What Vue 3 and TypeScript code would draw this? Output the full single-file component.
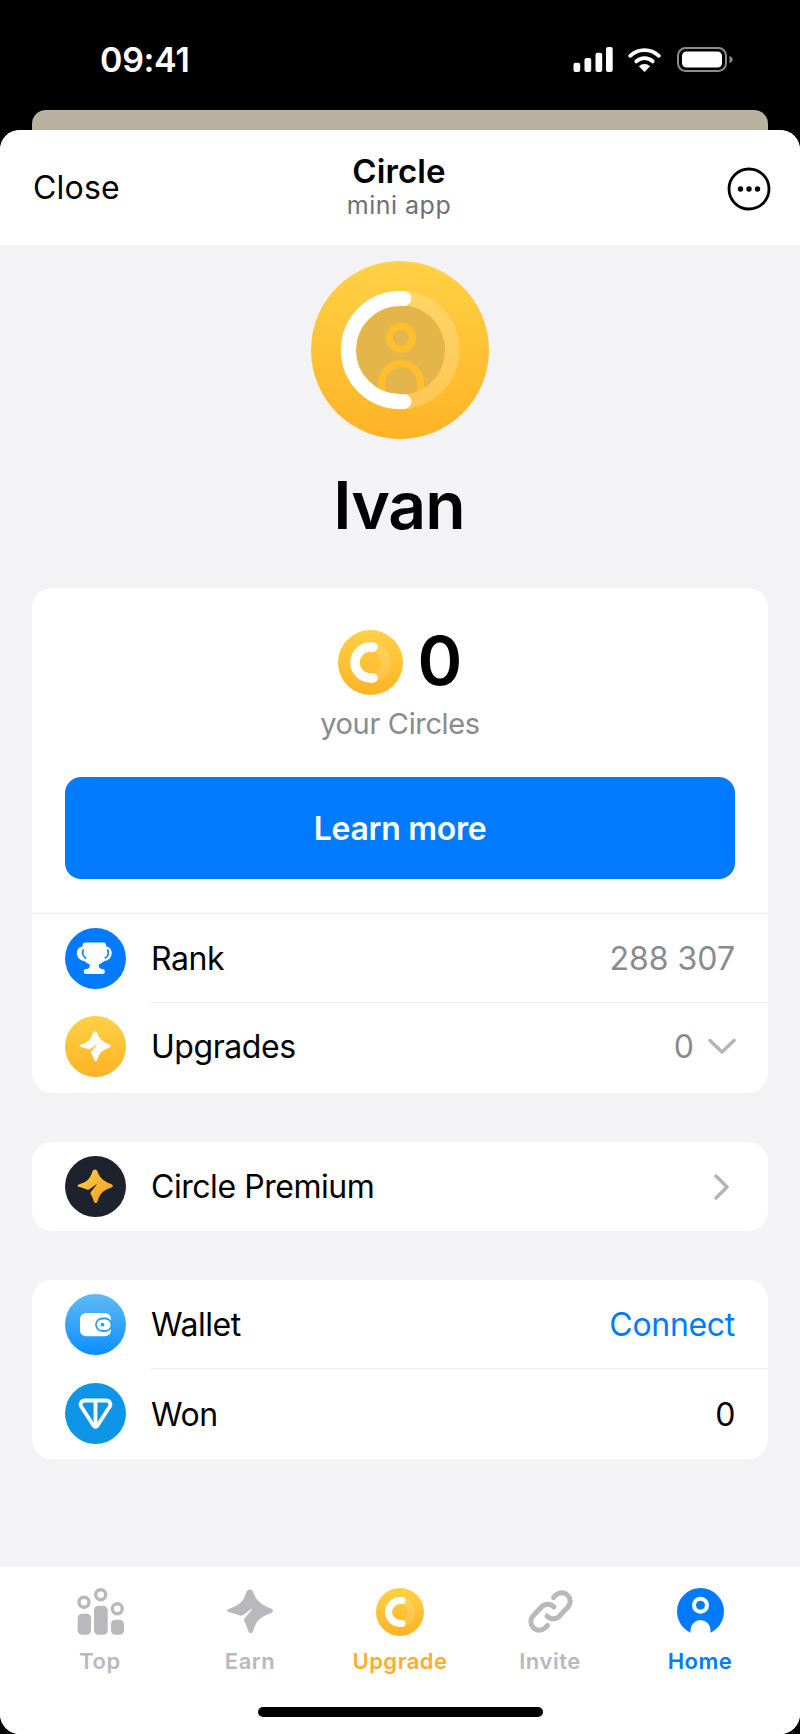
<script setup lang="ts">
interface Tab { label: string; kind: string }
const tabs: Tab[] = [
  { label: 'Top', kind: 'top' },
  { label: 'Earn', kind: 'earn' },
  { label: 'Upgrade', kind: 'upgrade' },
  { label: 'Invite', kind: 'invite' },
  { label: 'Home', kind: 'home' },
]
const star = 'M23.5 1.500c1.200 0 2 .8 2.500 2.200 1.500 4.500 3.500 7.500 5.500 9.500 2.500 2.500 6.500 5 12 7 1.500.6 2.500 1.300 2.500 2.500s-1 2-2.500 2.500c-5 1.800-9 4-11.500 6.500-2 2-4.200 5.500-5.800 11-.5 1.500-1.200 2.300-2.500 2.300s-2-.9-2.500-2.300c-1-3.500-2.500-7-4-9.500-.5-1-.3-1.800.5-3l7-8.500c.5-.7.2-1.200-.5-.8l-8 6c-1.500 1-2.500 1-4 .4-3-1.200-6-1.800-10-3-1.300-.4-2-.9-2-1.700s.8-1.400 2.200-1.900c5-1.800 9-3.900 11.500-6.400 2.300-2.300 4-5.500 5.300-9.800.6-2 2.500-3.100 4-3.100Z'
</script>

<template>
  <div class="screen">
    <div class="status">
      <span class="time">09:41</span>
      <div class="status-icons">
        <svg class="signal" width="40" height="25" viewBox="0 0 40 25" fill="#fff"><rect x=".5" y="15.700" width="6.700" height="9.300" rx="2"/><rect x="11.500" y="11" width="6.700" height="14" rx="2"/><rect x="22.500" y="5.700" width="6.700" height="19.300" rx="2"/><rect x="33" y="0" width="6.700" height="25" rx="2"/></svg>
        <svg width="33" height="25" viewBox="0 0 33 25"><path d="M2.200 8.800a21 21 0 0 1 28.600 0" fill="none" stroke="#fff" stroke-width="3.800" stroke-linecap="round"/><path d="M8.300 14.400a12 12 0 0 1 16.400 0" fill="none" stroke="#fff" stroke-width="3.800" stroke-linecap="round"/><path d="M16.500 25l-5.600-5.700a8 8 0 0 1 11.200 0Z" fill="#fff"/></svg>
        <svg width="57" height="25" viewBox="0 0 57 25"><rect x="1" y="1" width="48" height="23" rx="7.500" fill="none" stroke="#8c8c8c" stroke-width="2"/><rect x="5" y="4.500" width="40" height="16" rx="4.500" fill="#fff"/><path d="M52.500 9c2 .6 3.200 2 3.200 3.500s-1.200 2.900-3.200 3.500Z" fill="#8c8c8c"/></svg>
      </div>
    </div>
    <div class="peek-wrap"><div class="peek"></div></div>

    <div class="sheet">
      <header class="head">
        <span class="close">Close</span>
        <div class="title">
          <strong>Circle</strong>
          <span>mini app</span>
        </div>
        <svg class="more" width="44" height="44" viewBox="0 0 44 44"><circle cx="22" cy="22" r="20" fill="none" stroke="#000" stroke-width="2.800"/><circle cx="13.500" cy="22" r="2.700"/><circle cx="22" cy="22" r="2.700"/><circle cx="30.500" cy="22" r="2.700"/></svg>
      </header>

      <main class="content">
        <svg class="avatar" width="178" height="178" viewBox="0 0 178 178">
          <defs>
            <linearGradient id="gold" x1="0" y1="0" x2="0" y2="1"><stop offset="0" stop-color="#ffd146"/><stop offset="1" stop-color="#ffb325"/></linearGradient>
            <clipPath id="inner"><circle cx="89" cy="89" r="45"/></clipPath>
          </defs>
          <circle cx="89" cy="89" r="89" fill="url(#gold)"/>
          <circle cx="89" cy="89" r="52" fill="none" stroke="#fff" stroke-opacity=".2" stroke-width="15"/>
          <circle cx="89" cy="89" r="45" fill="#e3b54a"/>
          <g clip-path="url(#inner)" fill="none" stroke="#ffbe2b" stroke-width="7">
            <circle cx="90" cy="77" r="11.500"/>
            <path d="M70.500 140v-18a19.500 19.500 0 0 1 39 0v18"/>
          </g>
          <path d="M93 37.500h-4a51.500 51.500 0 0 0 0 103h4" fill="none" stroke="#fff" stroke-width="15" stroke-linecap="round"/>
        </svg>
        <h1 class="name">Ivan</h1>

        <section class="card">
          <div class="balance">
            <div class="amount">
              <svg width="65" height="65" viewBox="0 0 65 65">
                <defs><linearGradient id="gold2" x1="0" y1="0" x2="0" y2="1"><stop offset="0" stop-color="#ffd146"/><stop offset="1" stop-color="#ffb325"/></linearGradient></defs>
                <circle cx="32.500" cy="32.500" r="32.500" fill="url(#gold2)"/>
                <circle cx="32.500" cy="32.500" r="15.500" fill="none" stroke="#fff" stroke-opacity=".14" stroke-width="9.500"/>
                <path d="M35 17h-2.500a15.500 15.500 0 0 0 0 31h2.500" fill="none" stroke="#fff" stroke-width="9.500" stroke-linecap="round"/>
              </svg>
              <span class="zero">0</span>
            </div>
            <div class="your">your Circles</div>
            <button class="learn">Learn more</button>
          </div>
          <div class="row r89">
            <span class="ic blue">
              <svg width="61" height="61" viewBox="0 0 61 61"><path d="M22.500 14.500h16c1.500 0 2.500 1 2.500 2.500v1.500c3.500.3 5.700 3 5.700 6.500 0 4.500-3 7.500-7.500 8-1.500 1.500-3.500 2.800-5.200 3.200v2.300c0 1 .8 2 2.500 2.500h1c1.400 0 2.300 1 2.300 2.200v.8c0 1.200-.8 2-2 2h-17c-1.200 0-2-.8-2-2v-.8c0-1.200.9-2.200 2.300-2.200h1c1.700-.5 2.500-1.500 2.500-2.500v-2.300c-1.700-.4-3.700-1.700-5.200-3.200-4.500-.5-7.500-3.500-7.500-8 0-3.500 2.200-6.200 5.700-6.500V17c0-1.500 1-2.500 2.500-2.500Z" fill="#fff"/><path d="M18.300 22c-1.500 2.500-.5 6.500 2.500 8M42.700 22c1.500 2.500.5 6.500-2.500 8" fill="none" stroke="#007aff" stroke-width="1.600" stroke-linecap="round"/></svg>
            </span>
            <div class="row-body"><span>Rank</span><span class="gray">288 307</span></div>
          </div>
          <div class="row r91">
            <span class="ic gold">
              <svg width="61" height="61" viewBox="-21.300 -21.300 89.600 89.600"><path :d="star" fill="#fff"/></svg>
            </span>
            <div class="row-body"><span>Upgrades</span><span class="right-group"><span class="gray">0</span><svg width="28" height="17" viewBox="0 0 28 17"><path d="M2 2.500l12 11.500 12-11.500" fill="none" stroke="#b5b5b9" stroke-width="3.500" stroke-linecap="round" stroke-linejoin="round"/></svg></span></div>
          </div>
        </section>

        <section class="card">
          <div class="row">
            <span class="ic dark">
              <svg width="61" height="61" viewBox="-16.300 -16.300 79.600 79.600"><defs><linearGradient id="gold3" x1="0" y1="0" x2="1" y2="1"><stop offset="0" stop-color="#ffcf4a"/><stop offset="1" stop-color="#f49a1c"/></linearGradient></defs><path :d="star" fill="url(#gold3)"/></svg>
            </span>
            <div class="row-body"><span>Circle Premium</span><svg class="chev" width="17" height="28" viewBox="0 0 17 28"><path d="M3 3l11 11L3 25" fill="none" stroke="#b5b5b9" stroke-width="3.500" stroke-linecap="round" stroke-linejoin="round"/></svg></div>
          </div>
        </section>

        <section class="card">
          <div class="row r88">
            <span class="ic sky">
              <svg width="61" height="61" viewBox="0 0 61 61"><rect x="15" y="19" width="31" height="23.300" rx="6" fill="#fff"/><rect x="31" y="24.500" width="15.500" height="12.500" rx="6.200" fill="#fff" stroke="#2f9ffb" stroke-width="1.800"/><circle cx="37.500" cy="30.700" r="1.900" fill="#2f9ffb"/></svg>
            </span>
            <div class="row-body"><span>Wallet</span><span class="link">Connect</span></div>
          </div>
          <div class="row last">
            <span class="ic ton">
              <svg width="61" height="61" viewBox="0 0 61 61"><path d="M20 17.500h21c3.500 0 5.500 3.200 3.800 6L32.200 43c-.8 1.200-2.600 1.200-3.400 0L16.200 23.500c-1.700-2.800.3-6 3.800-6Z" fill="none" stroke="#fff" stroke-width="3.800" stroke-linejoin="round"/><path d="M30.500 18v25" stroke="#fff" stroke-width="3.800"/></svg>
            </span>
            <div class="row-body"><span>Won</span><span>0</span></div>
          </div>
        </section>
      </main>

      <nav class="tabs">
        <div v-for="t in tabs" :key="t.kind" class="tab" :class="t.kind">
          <svg v-if="t.kind === 'top'" width="47" height="47" viewBox="0 0 47 47" fill="#b9b9bd"><rect x=".7" y="25.700" width="13.300" height="21" rx="4.500"/><rect x="17" y="17.700" width="13.700" height="29" rx="4.500"/><rect x="34" y="31.700" width="13" height="15" rx="4.500"/><g fill="none" stroke="#b9b9bd" stroke-width="3.400"><circle cx="7" cy="14.300" r="5"/><circle cx="23.700" cy="6.700" r="5"/><circle cx="40.300" cy="20.700" r="5"/></g></svg>
          <svg v-else-if="t.kind === 'earn'" width="47" height="47" viewBox="0 0 47 47"><path :d="star" fill="#b9b9bd"/></svg>
          <svg v-else-if="t.kind === 'upgrade'" width="48" height="48" viewBox="0 0 65 65"><defs><linearGradient id="gold4" x1="0" y1="0" x2="0" y2="1"><stop offset="0" stop-color="#ffd146"/><stop offset="1" stop-color="#ffb325"/></linearGradient></defs><circle cx="32.500" cy="32.500" r="32.500" fill="url(#gold4)"/><circle cx="32.500" cy="32.500" r="15.500" fill="none" stroke="#fff" stroke-opacity=".14" stroke-width="9.500"/><path d="M35 17h-2.500a15.500 15.500 0 0 0 0 31h2.500" fill="none" stroke="#fff" stroke-width="9.500" stroke-linecap="round"/></svg>
          <svg v-else-if="t.kind === 'invite'" width="47" height="47" viewBox="0 0 47 47" fill="none" stroke="#b9b9bd" stroke-width="5" stroke-linecap="round"><path d="M26.500 9.500L29 7a8.500 8.500 0 0 1 12 12l-8 8.500a8.500 8.500 0 0 1-13 .5"/><path d="M20.500 37.500L18 40a8.500 8.500 0 0 1-12-12l8-8.500a8.500 8.500 0 0 1 13-.5"/></svg>
          <svg v-else width="47" height="47" viewBox="0 0 47 47"><circle cx="23.500" cy="23.500" r="23.500" fill="#007aff"/><circle cx="23.500" cy="17.300" r="6.500" fill="none" stroke="#fff" stroke-width="4"/><path d="M13.500 46v-4a10 10 0 0 1 20 0v4a23.500 23.500 0 0 1-20 0Z" fill="#fff"/></svg>
          <span class="label">{{ t.label }}</span>
        </div>
        <div class="indicator"></div>
      </nav>
    </div>
  </div>
</template>

<style>
html, body { margin: 0; background: #000; }
</style>

<style scoped>
* { box-sizing: border-box; }
.screen { width: 800px; height: 1734px; background: #000; display: flex; flex-direction: column; font-family: Inter, "Liberation Sans", sans-serif; color: #000; overflow: hidden; }
.status { height: 110px; display: flex; justify-content: space-between; align-items: flex-start; padding: 40px 66px 0 100px; color: #fff; }
.time { font-size: 34px; font-weight: 600; line-height: 40px; letter-spacing: -.3px; }
.status-icons { display: flex; gap: 16px; align-items: center; padding-top: 7px; }
.status-icons svg { display: block; }
.signal { margin-right: -1px; }
.peek-wrap { padding: 0 32px; height: 20px; flex: none; }
.peek { height: 40px; border-radius: 14px; background: #b9b19f; }
.sheet { flex: 1; position: relative; display: flex; flex-direction: column; border-radius: 20px; background: #f3f3f6; overflow: hidden; min-height: 0; }
.head { height: 115px; flex: none; background: #fff; display: flex; align-items: center; justify-content: space-between; padding: 0 29px 0 33px; position: relative; }
.close { font-size: 32px; letter-spacing: .2px; }
.title { position: absolute; left: 0; right: 2px; top: 21px; display: flex; flex-direction: column; align-items: center; pointer-events: none; }
.title strong { font-size: 33px; line-height: 40px; font-weight: 600; letter-spacing: .1px; }
.title span { font-size: 25px; line-height: 28px; color: #707074; letter-spacing: .5px; }
.more { margin-top: 3px; }
.content { flex: 1; min-height: 0; display: flex; flex-direction: column; align-items: center; padding: 16px 32px 0; }
.avatar { flex: none; }
.name { margin: 27px 0 44px; padding-right: 2px; font-size: 66px; line-height: 78px; font-weight: 600; letter-spacing: -1px; }
.card { width: 100%; background: #fff; border-radius: 20px; margin-bottom: 49px; flex: none; }
.balance { height: 326px; padding: 40px 33px 0; border-bottom: 1px solid #ececee; display: flex; flex-direction: column; align-items: center; }
.amount { display: flex; align-items: center; gap: 15px; height: 68px; }
.zero { font-size: 68px; font-weight: 600; line-height: 68px; margin-bottom: 5px; }
.your { font-size: 29px; line-height: 40px; margin-top: 8px; color: #8a8a8e; letter-spacing: -.35px; }
.learn { width: 100%; height: 102px; margin-top: 33px; border: 0; border-radius: 16px; background: #007aff; color: #fff; font: 600 32px Inter, sans-serif; letter-spacing: -.3px; }
.row { display: flex; align-items: center; padding-left: 33px; height: 89px; }
.row + .row .row-body { border-top: 1px solid #ececee; }
.row.r88 { height: 88px; }
.row.r89 { height: 88px; }
.row.r91 { height: 91px; padding-bottom: 3px; }
.row.last { height: 91px; }
.ic { width: 61px; height: 61px; border-radius: 50%; flex: none; display: block; margin-right: 25px; }
.ic svg { display: block; }
.blue { background: #007aff; }
.gold { background: linear-gradient(#ffd146, #ffb325); }
.dark { background: #1e222c; }
.sky { background: linear-gradient(#5fbaf5, #0a8fff); }
.ton { background: #0f95e6; }
.row-body { flex: 1; height: 100%; display: flex; align-items: center; justify-content: space-between; padding-right: 33px; font-size: 32px; letter-spacing: -.45px; }
.gray { color: #8a8a8e; letter-spacing: 0; }
.link { color: #007aff; letter-spacing: -.3px; }
.right-group { display: flex; align-items: center; gap: 14px; margin-right: -1px; }
.chev { margin-right: 5px; }
.tabs { margin-top: auto; height: 167px; flex: none; background: #fff; display: grid; grid-template-columns: repeat(5, 150px); padding: 21px 25px 0; position: relative; }
.tab { display: flex; flex-direction: column; align-items: center; gap: 12px; }
.tab.upgrade { gap: 11px; }
.label { font-size: 22px; font-weight: 600; line-height: 28px; color: #b9b9bd; letter-spacing: .5px; }
.upgrade .label { color: #ffad2e; }
.home .label { color: #007aff; }
.indicator { position: absolute; left: 258px; bottom: 17px; width: 285px; height: 10px; border-radius: 5px; background: #000; }
</style>
